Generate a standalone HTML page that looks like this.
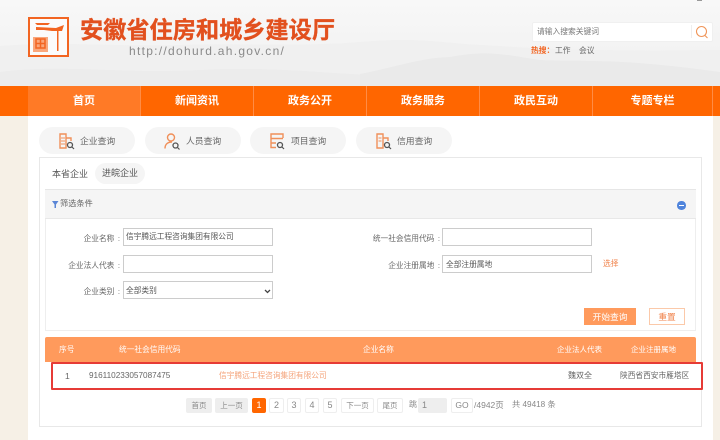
<!DOCTYPE html>
<html lang="zh"><head><meta charset="utf-8">
<style>
*{box-sizing:border-box;margin:0;padding:0}
html,body{width:720px;height:440px;overflow:hidden;background:#f6f0e6}
body{position:relative;font-family:"Liberation Sans","Noto Sans CJK SC",sans-serif;font-size:8px;color:#555}
#w{position:absolute;left:0;top:0;width:720px;height:440px;background:#f6f0e6;overflow:hidden;filter:blur(.3px)}
.a{position:absolute;white-space:nowrap}
.nav{position:absolute;top:86px;height:30px;width:113px;border-right:1px solid #ff8c45;color:#fff;font-weight:bold;font-size:11px;text-align:center;line-height:30px}
.pill{position:absolute;top:127px;height:27px;background:#f5f5f5;border-radius:14px}
.pill span{position:absolute;left:41px;top:8px;font-size:8.800px;line-height:12px;color:#666;white-space:nowrap}
.pill svg{position:absolute;left:20px;top:6px}
.lb{position:absolute;text-align:right;font-size:7.700px;line-height:12px;color:#666;white-space:nowrap}
.lb i{font-style:normal;margin-left:3.500px}
.ip{position:absolute;height:18px;background:#fff;border:1px solid #ccc;font-size:7.700px;line-height:16px;padding-left:2px;color:#555;white-space:nowrap}
.pg{position:absolute;top:398px;height:15px;border:1px solid #eee;border-radius:2px;background:#fff;font-size:7.500px;line-height:13px;text-align:center;color:#888}
.n{font-size:9px}
.g{background:#eee;border-color:#eee}
.th{position:absolute;top:344px;font-size:7.700px;line-height:12px;color:#fff;white-space:nowrap}
.td{position:absolute;top:370px;font-size:7.700px;line-height:12px;color:#666;white-space:nowrap}
</style></head><body><div id="w">
<div class="a" style="left:0;top:0;width:720px;height:86px;background:linear-gradient(#f8f8f8,#f4f4f4 45%,#f0f0f0 100%)"></div>
<svg class="a" style="left:0;top:36px" width="720" height="50" viewBox="0 0 720 50"><path d="M0 10C60 5 120 11 180 9S300 11 360 6 440 7 480 9 560 16 720 14V50H0Z" fill="#f0f0f0"/><path d="M0 36C60 28 120 38 200 34S320 38 400 40V50H0Z" fill="#ececec"/><path d="M360 38C400 30 420 22 450 21 490 13 510 20 540 24 590 26 620 22 720 36V50H360Z" fill="#eaeaea"/></svg>
<div class="a" style="left:697px;top:0;width:5px;height:1px;background:#999"></div>
<!-- logo -->
<svg class="a" style="left:28px;top:17px" width="42" height="41" viewBox="0 0 42 41">
<rect x="1" y="1" width="39" height="38" fill="#fbfbfb" stroke="#f26522" stroke-width="2"/>
<path d="M7 6H22L20 8H9ZM8 10L28 11 36 8 34 14H24L16 13H8Z" fill="#f26522"/>
<rect x="29" y="14" width="1.500" height="20" fill="#f26522"/>
<rect x="5" y="20" width="15" height="15" fill="#f9a77c"/>
<path d="M8 22H17V31H8ZM8 26.500H17M12.500 22V31" fill="none" stroke="#f26522" stroke-width="1.500"/>
</svg>
<div class="a" style="left:80px;top:16px;font-size:23.200px;line-height:28px;font-weight:bold;color:#e2501e;-webkit-text-stroke:.3px #e2501e">安徽省住房和城乡建设厅</div>
<div class="a" style="left:129px;top:44px;font-size:12px;line-height:15px;color:#8a8a8a;letter-spacing:1.290px">http://dohurd.ah.gov.cn/</div>
<!-- search -->
<div class="a" style="left:532px;top:22px;width:181px;height:20px;background:#fff;border-radius:2px;border:1px solid #f0f0f0"></div>
<div class="a" style="left:537px;top:26px;font-size:7.750px;line-height:12px;color:#777">请输入搜索关键词</div>
<div class="a" style="left:691px;top:25px;width:1px;height:13px;background:#eee"></div>
<svg class="a" style="left:695px;top:25px" width="14" height="14" viewBox="0 0 14 14"><circle cx="6.500" cy="6.500" r="5" fill="none" stroke="#f0965a" stroke-width="1.100"/><path d="M10 10.500L12.500 13" stroke="#f0965a" stroke-width="1.100"/></svg>
<div class="a" style="left:531px;top:45px;font-size:7.750px;line-height:12px;color:#f26522;font-weight:bold">热搜：</div>
<div class="a" style="left:555px;top:45px;font-size:7.750px;line-height:12px;color:#666">工作</div>
<div class="a" style="left:579px;top:45px;font-size:7.750px;line-height:12px;color:#666">会议</div>
<!-- nav -->
<div class="a" style="left:0;top:86px;width:720px;height:30px;background:#ff6600"></div>
<div class="nav" style="left:28px;background:#ff7a26">首页</div>
<div class="nav" style="left:141px">新闻资讯</div>
<div class="nav" style="left:254px">政务公开</div>
<div class="nav" style="left:367px">政务服务</div>
<div class="nav" style="left:480px">政民互动</div>
<div class="nav" style="left:593px;width:120px">专题专栏</div>
<!-- content -->
<div class="a" style="left:28px;top:116px;width:685px;height:324px;background:#fff"></div>
<div class="pill" style="left:39px;width:96px"><svg width="18" height="18" viewBox="0 0 18 18" fill="none"><path d="M1 1H7V15H1ZM7 5H12V8" stroke="#f0905a" stroke-width="1.400"/><path d="M2 5H6M2 8H6M2 11H6" stroke="#f0905a"/><circle cx="11" cy="12" r="2.500" stroke="#555" stroke-width="1.300"/><path d="M13 14L15 16" stroke="#555" stroke-width="1.200"/></svg><span>企业查询</span></div>
<div class="pill" style="left:145px;width:96px"><svg style="left:19px" width="18" height="18" viewBox="0 0 18 18" fill="none"><circle cx="7" cy="4.500" r="3.500" stroke="#f0905a" stroke-width="1.400"/><path d="M1 15.500C1 11 4 9 8 9" stroke="#f0905a" stroke-width="1.400"/><circle cx="11.500" cy="12.500" r="2.500" stroke="#555" stroke-width="1.300"/><path d="M13.500 14.500L15.500 16.500" stroke="#555" stroke-width="1.200"/></svg><span>人员查询</span></div>
<div class="pill" style="left:250px;width:96px"><svg width="18" height="18" viewBox="0 0 18 18" fill="none"><path d="M13 5V1H1V14.500H6M1 5.500H13M1 10H6" stroke="#f0905a" stroke-width="1.400"/><circle cx="10" cy="12" r="2.500" stroke="#555" stroke-width="1.300"/><path d="M12 14L14 16" stroke="#555" stroke-width="1.200"/></svg><span>项目查询</span></div>
<div class="pill" style="left:356px;width:96px"><svg width="18" height="18" viewBox="0 0 18 18" fill="none"><path d="M1 1H7V15H1ZM7 5H12V8" stroke="#f0905a" stroke-width="1.400"/><path d="M2.500 5H5.500M2.500 8H5.500" stroke="#f0905a"/><circle cx="11" cy="12" r="2.500" stroke="#555" stroke-width="1.300"/><path d="M13 14L15 16" stroke="#555" stroke-width="1.200"/></svg><span>信用查询</span></div>
<div class="a" style="left:39px;top:157px;width:663px;height:270px;border:1px solid #e8e8e8;background:#fff"></div>
<div class="a" style="left:52px;top:168px;font-size:9px;line-height:12px;color:#555">本省企业</div>
<div class="a" style="left:95px;top:163px;width:50px;height:21px;background:#f5f5f5;border-radius:11px;text-align:center;font-size:9px;line-height:21px;color:#555">进皖企业</div>
<div class="a" style="left:45px;top:189px;width:651px;height:142px;border:1px solid #eee;border-top:0"></div>
<div class="a" style="left:45px;top:189px;width:651px;height:30px;background:#f5f5f5;border-top:1px solid #e6e6e6;border-bottom:1px solid #e8e8e8"></div>
<svg class="a" style="left:52px;top:201px" width="7" height="7" viewBox="0 0 7 7"><path d="M0 0H6.500L4 3.500V7H2.500V3.500Z" fill="#5b86d6"/></svg>
<div class="a" style="left:60px;top:198px;font-size:8.200px;line-height:12px;color:#666">筛选条件</div>
<div class="a" style="left:677px;top:201px;width:8.500px;height:8.500px;border-radius:50%;background:#4f84dc"></div>
<div class="a" style="left:679px;top:205px;width:4.500px;height:1px;background:#fff"></div>
<div class="lb" style="right:600px;top:233px">企业名称<i>:</i></div>
<div class="ip" style="left:123px;top:228px;width:150px">信宇腾远工程咨询集团有限公司</div>
<div class="lb" style="right:600px;top:260px">企业法人代表<i>:</i></div>
<div class="ip" style="left:123px;top:255px;width:150px"></div>
<div class="lb" style="right:600px;top:286px">企业类别<i>:</i></div>
<div class="ip" style="left:123px;top:281px;width:150px;padding-top:1px">全部类别</div>
<svg class="a" style="left:264px;top:289px" width="7" height="5" viewBox="0 0 7 5"><path d="M1 1L3.500 3.500 6 1" fill="none" stroke="#444" stroke-width="1.300"/></svg>
<div class="lb" style="right:280px;top:233px">统一社会信用代码<i>:</i></div>
<div class="ip" style="left:442px;top:228px;width:150px"></div>
<div class="lb" style="right:280px;top:260px">企业注册属地<i>:</i></div>
<div class="ip" style="left:442px;top:255px;width:150px;padding-left:3px;padding-top:1px">全部注册属地</div>
<div class="a" style="left:603px;top:258px;font-size:7.700px;line-height:12px;color:#f0824a">选择</div>
<div class="a" style="left:584px;top:308px;width:52px;height:17px;background:#ff9a5c;color:#fff;font-size:8.700px;line-height:18px;text-align:center">开始查询</div>
<div class="a" style="left:649px;top:308px;width:36px;height:17px;border:1px solid #fbc9a9;color:#f0824a;font-size:8.700px;line-height:16px;text-align:center">重置</div>
<!-- table -->
<div class="a" style="left:45px;top:337px;width:651px;height:25px;background:#ff9a5c;border-radius:2px 2px 0 0"></div>
<div class="th" style="left:59px">序号</div>
<div class="th" style="left:119px">统一社会信用代码</div>
<div class="th" style="left:363px">企业名称</div>
<div class="th" style="left:557px;font-size:7.500px">企业法人代表</div>
<div class="th" style="left:631px;font-size:7.500px">企业注册属地</div>
<div class="a" style="left:51px;top:362px;width:652px;height:28px;border:2px solid #e63b36;border-radius:1px;background:#fff"></div>
<div class="td" style="left:65px;font-size:8.500px">1</div>
<div class="td" style="left:89px;font-size:8.200px">916110233057087475</div>
<div class="td" style="left:219px;color:#f4a37a">信宇腾远工程咨询集团有限公司</div>
<div class="td" style="left:568px;font-size:8px">魏双全</div>
<div class="td" style="left:620px">陕西省西安市雁塔区</div>
<!-- pagination -->
<div class="pg g" style="left:186px;width:26px">首页</div>
<div class="pg g" style="left:215px;width:33px">上一页</div>
<div class="pg n" style="left:252px;width:14px;background:#ff6600;border-color:#ff6600;color:#fff">1</div>
<div class="pg n" style="left:269px;width:15px">2</div>
<div class="pg n" style="left:287px;width:14px">3</div>
<div class="pg n" style="left:305px;width:14px">4</div>
<div class="pg n" style="left:323px;width:14px">5</div>
<div class="pg" style="left:341px;width:33px">下一页</div>
<div class="pg" style="left:377px;width:26px">尾页</div>
<div class="a" style="left:409px;top:399px;font-size:8px;line-height:12px;color:#888">跳</div>
<div class="pg g n" style="left:418px;width:29px;text-align:left;padding-left:3px">1</div>
<div class="pg n" style="left:451px;width:22px;font-size:8.500px">GO</div>
<div class="a" style="left:474px;top:399px;font-size:8.500px;line-height:12px;color:#888">/4942页</div>
<div class="a" style="left:512px;top:399px;font-size:8.200px;line-height:12px;color:#888">共 49418 条</div>
</div></body></html>
